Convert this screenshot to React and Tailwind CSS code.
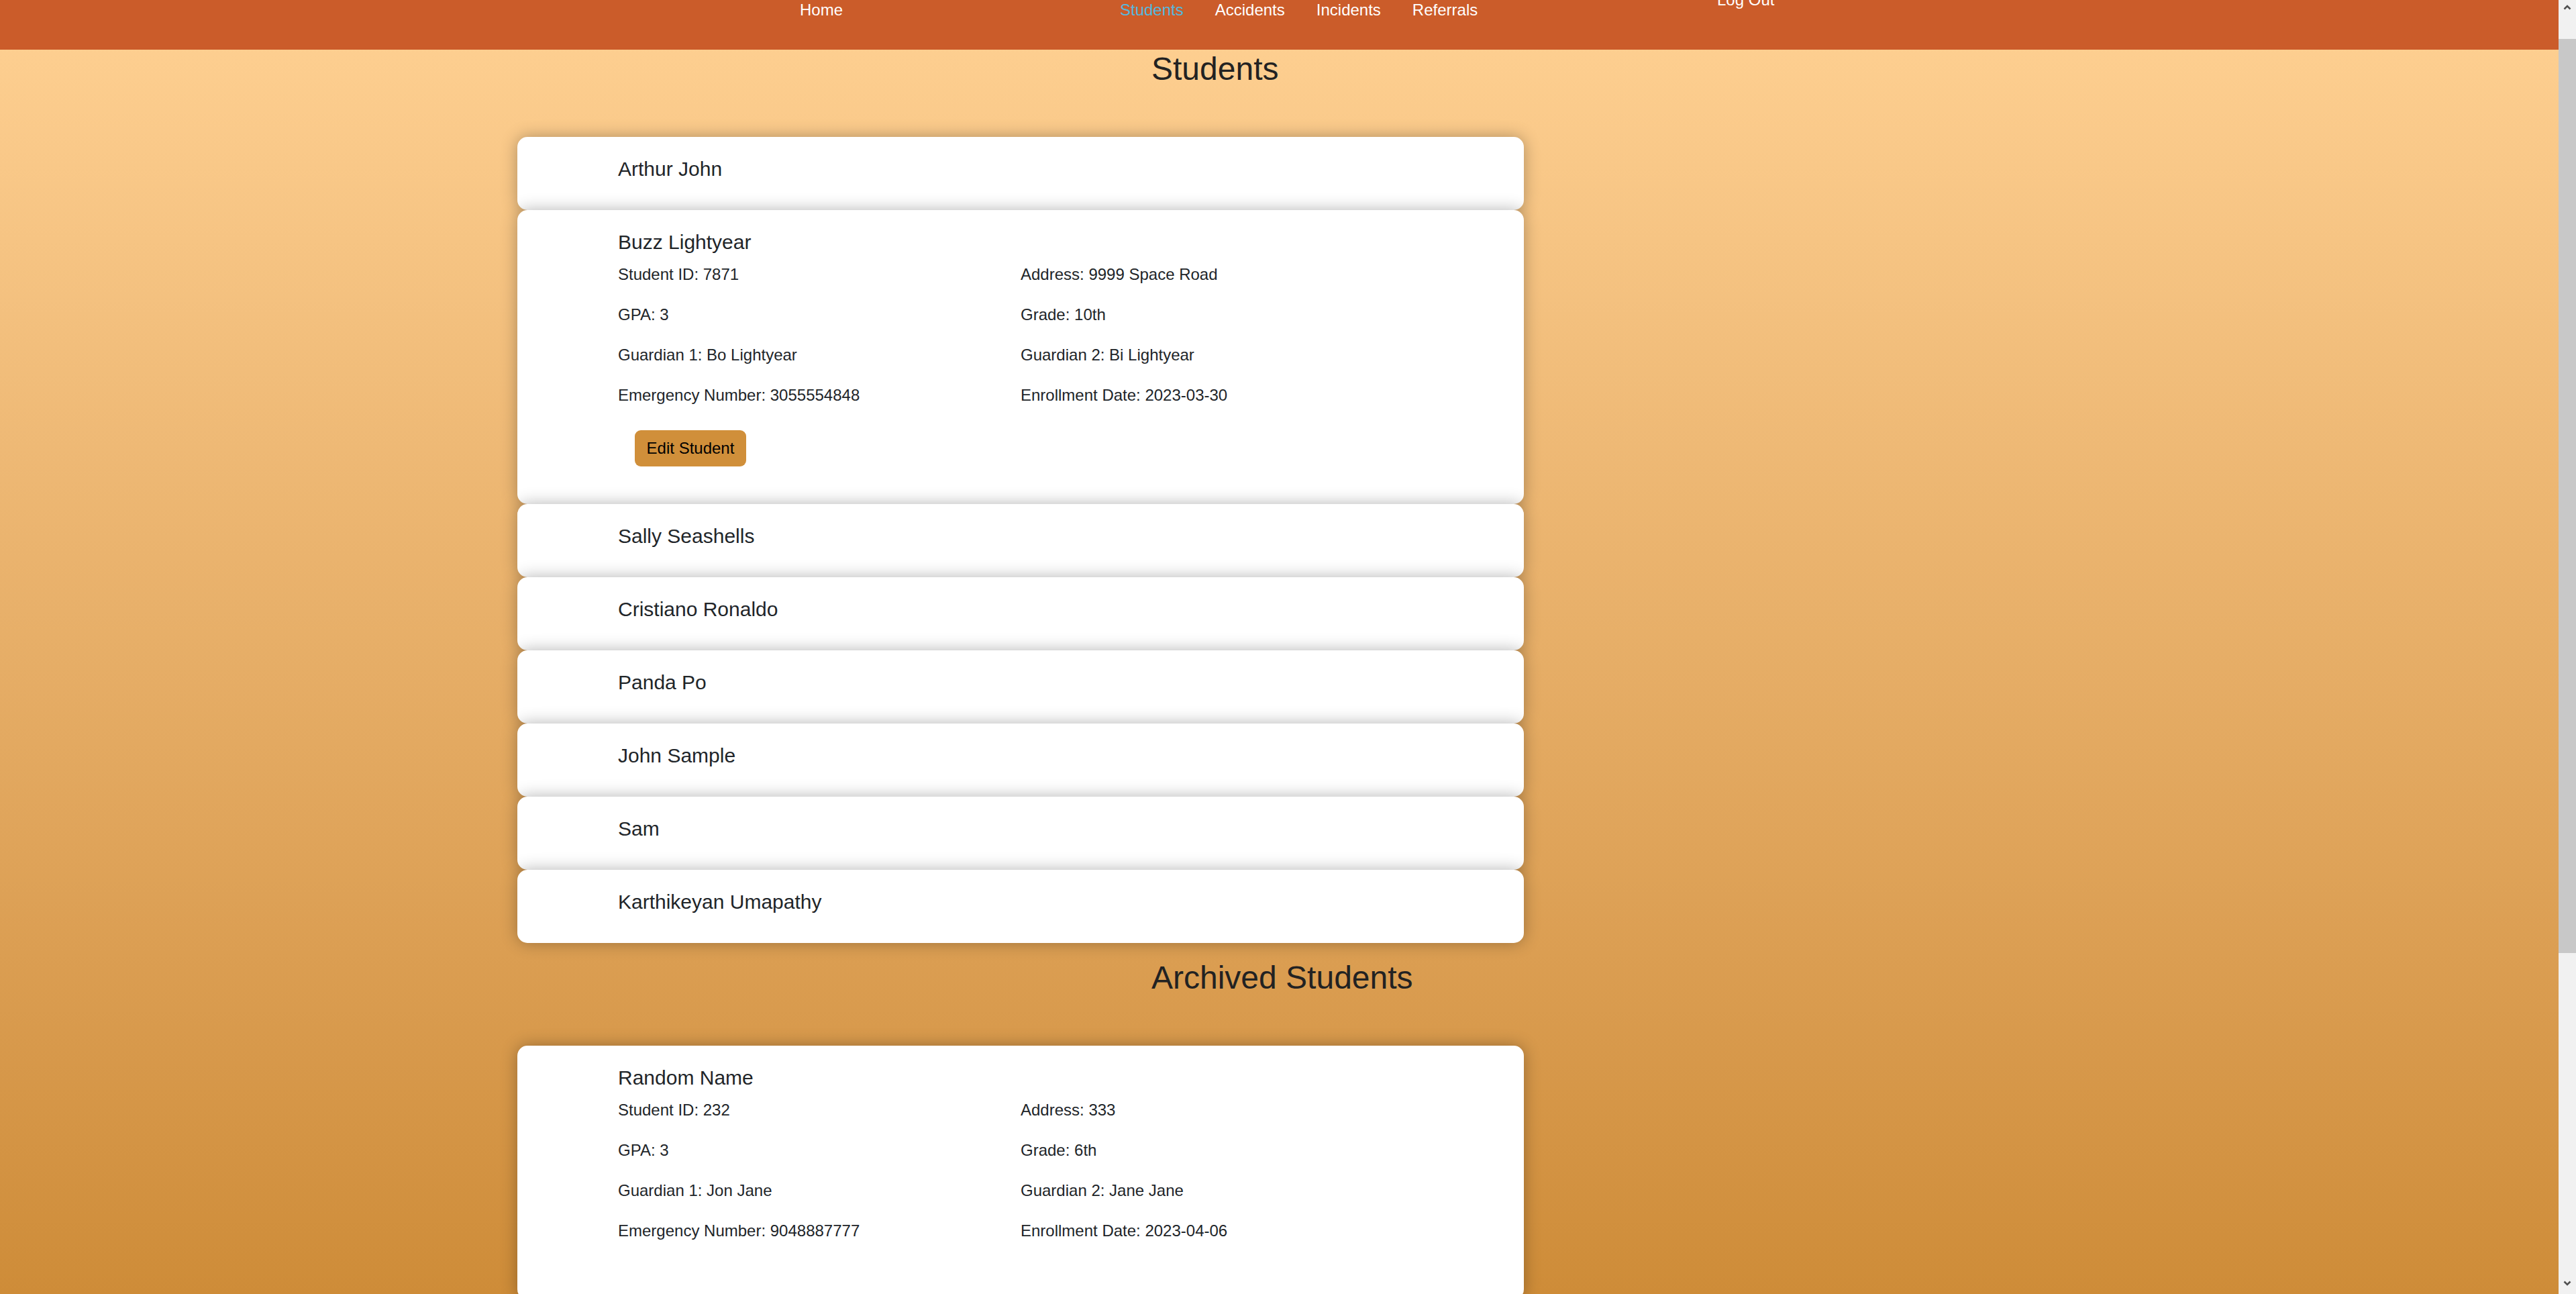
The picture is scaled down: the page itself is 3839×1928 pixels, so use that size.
import React from 'react';

const students = [
  { name: 'Arthur John' },
  {
    name: 'Buzz Lightyear',
    open: true,
    id: '7871',
    address: '9999 Space Road',
    gpa: '3',
    grade: '10th',
    g1: 'Bo Lightyear',
    g2: 'Bi Lightyear',
    phone: '3055554848',
    enrolled: '2023-03-30',
  },
  { name: 'Sally Seashells' },
  { name: 'Cristiano Ronaldo' },
  { name: 'Panda Po' },
  { name: 'John Sample' },
  { name: 'Sam' },
  { name: 'Karthikeyan Umapathy' },
];

const archived = [
  {
    name: 'Random Name',
    open: true,
    id: '232',
    address: '333',
    gpa: '3',
    grade: '6th',
    g1: 'Jon Jane',
    g2: 'Jane Jane',
    phone: '9048887777',
    enrolled: '2023-04-06',
  },
];

const StudentCard = ({ s, editable }) => {
  if (!s.open) {
    return (
      <div className="ml-[771px] w-[1500px] h-[109px] shrink-0 bg-white rounded-[15px] shadow-[0_0_24px_rgba(0,0,0,0.3)] pl-[150px] pt-[31px]">
        <p className="text-[30px] leading-[34px]">{s.name}</p>
      </div>
    );
  }
  return (
    <div className="ml-[771px] w-[1500px] shrink-0 bg-white rounded-[15px] shadow-[0_0_24px_rgba(0,0,0,0.3)] pl-[150px] pt-[31px] pb-[56px]">
      <p className="text-[30px] leading-[34px]">{s.name}</p>
      <div className="mt-[17px] grid grid-cols-[600px_600px] auto-rows-[60px] text-[24px] leading-[28px]">
        <p>Student ID: {s.id}</p>
        <p>Address: {s.address}</p>
        <p>GPA: {s.gpa}</p>
        <p>Grade: {s.grade}</p>
        <p>Guardian 1: {s.g1}</p>
        <p>Guardian 2: {s.g2}</p>
        <p>Emergency Number: {s.phone}</p>
        <p>Enrollment Date: {s.enrolled}</p>
      </div>
      {editable && (
        <button className="mt-[6px] ml-[25px] h-[54px] w-[166px] rounded-[9px] bg-[#d08f3a] text-black text-[24px] leading-[28px]">
          Edit Student
        </button>
      )}
    </div>
  );
};

const Chevron = ({ up }) => (
  <svg width="12" height="8" viewBox="0 0 12 8">
    <polyline
      points={up ? '1.5,6.5 6,2 10.5,6.5' : '1.5,1.5 6,6 10.5,1.5'}
      fill="none"
      stroke="#505050"
      strokeWidth="2.6"
    />
  </svg>
);

const App = () => {
  return (
    <div className="flex h-[1928px] w-full overflow-hidden font-['Liberation_Sans',Arial,sans-serif] text-[#212529]">
      {/* Page */}
      <div className="flex-1 min-w-0 flex flex-col overflow-hidden bg-gradient-to-b from-[#ffd193] to-[#ce8c38]">
        {/* Nav */}
        <nav className="h-[74px] shrink-0 bg-[#cb5c2a] flex items-start pl-[1192px] text-white text-[24px] leading-[28px]">
          <div className="w-[477px] mt-[1px]">Home</div>
          <div className="w-[890px] mt-[1px] flex gap-[47px]">
            <span className="text-[#55b9df]">Students</span>
            <span>Accidents</span>
            <span>Incidents</span>
            <span>Referrals</span>
          </div>
          <div className="-mt-[14px]">Log Out</div>
        </nav>

        <h2 className="shrink-0 mt-[1px] mb-[74px] pl-[1716px] text-[48px] leading-[55px] font-normal text-[#222]">
          Students
        </h2>
        {students.map((s) => (
          <StudentCard key={s.name} s={s} editable />
        ))}

        <h2 className="shrink-0 mt-[24px] mb-[74px] pl-[1716px] text-[48px] leading-[55px] font-normal text-[#222]">
          Archived Students
        </h2>
        {archived.map((s) => (
          <StudentCard key={s.name} s={s} />
        ))}
      </div>

      {/* Scrollbar */}
      <div className="w-[26px] shrink-0 flex flex-col bg-[#f1f1f1]">
        <div className="h-[58px] shrink-0 flex justify-center pt-[7px]">
          <Chevron up />
        </div>
        <div className="h-[1362px] shrink-0 bg-[#c8c8c8]"></div>
        <div className="flex-1"></div>
        <div className="h-[26px] shrink-0 flex justify-center pt-[6px]">
          <Chevron />
        </div>
      </div>
    </div>
  );
};

export default App;
